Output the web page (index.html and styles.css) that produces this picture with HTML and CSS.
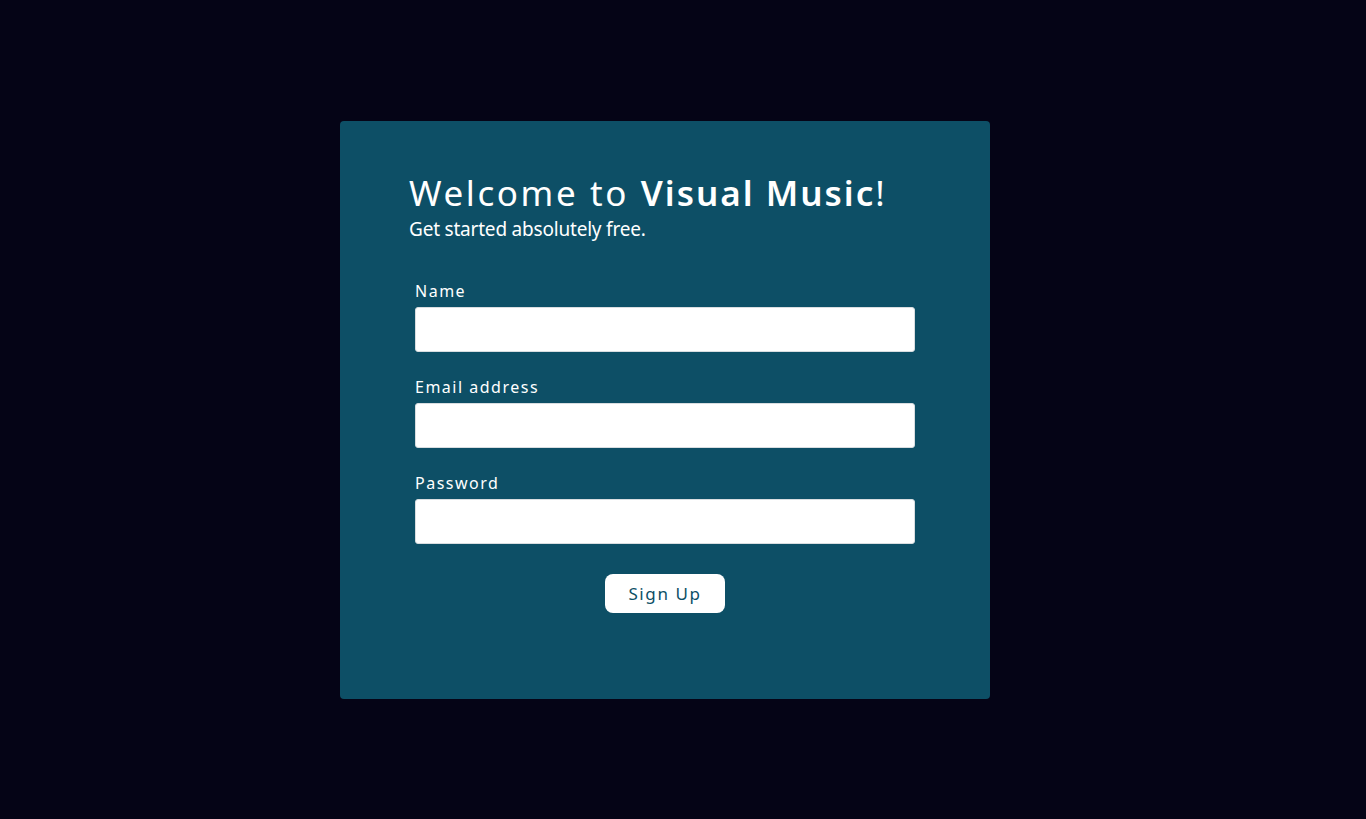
FILE: index.html
```html
<!DOCTYPE html>
<html>
<head>
<meta charset="utf-8">
<link rel="stylesheet" href="styles.css">
</head>
<body>
<div class="page">
  <div class="card">
    <div class="heading">
      <h1 class="title">Welcome to <b>Visual Music</b>!</h1>
      <p class="subtitle">Get started absolutely free.</p>
    </div>
    <form class="form">
      <div class="field">
        <label class="label">Name</label>
        <input class="input" type="text">
      </div>
      <div class="field">
        <label class="label">Email address</label>
        <input class="input" type="email">
      </div>
      <div class="field">
        <label class="label">Password</label>
        <input class="input" type="password">
      </div>
      <div class="actions">
        <button class="btn" type="button">Sign Up</button>
      </div>
    </form>
  </div>
</div>
</body>
</html>
```
FILE: styles.css
```css
html, body {
  margin: 0;
  padding: 0;
  background: #050416;
  font-family: "Noto Sans", "Open Sans", sans-serif;
  color: #fff;
}
.page {
  height: 819px;
  display: flex;
  justify-content: center;
  align-items: flex-start;
  padding: 121px 36px 0 0;
  box-sizing: border-box;
}
.card {
  width: 650px;
  height: 578px;
  background: #0d4f66;
  border-radius: 4px;
  box-sizing: border-box;
  padding: 51px 0 0 0;
}
.heading {
  padding-left: 69px;
}
.title {
  margin: 0;
  font-size: 35px;
  font-weight: 400;
  letter-spacing: 2.6px;
  line-height: 42px;
}
.title b {
  font-weight: 600;
  letter-spacing: 2px;
}
.subtitle {
  margin: 2px 0 0;
  font-size: 19px;
  line-height: 26px;
  letter-spacing: -0.2px;
}
.form {
  width: 500px;
  margin: 38px auto 0;
  display: flex;
  flex-direction: column;
  gap: 24px;
}
.field {
  display: flex;
  flex-direction: column;
  gap: 5px;
}
.label {
  font-size: 16px;
  letter-spacing: 1.5px;
  line-height: 22px;
}
.input {
  height: 45px;
  box-sizing: border-box;
  border: 1px solid #d8dde0;
  border-radius: 3px;
  background: #fff;
  margin: 0;
}
.actions {
  display: flex;
  justify-content: center;
  padding-top: 6px;
}
.btn {
  width: 120px;
  height: 39px;
  border: none;
  border-radius: 8px;
  background: #fff;
  color: #0d4f66;
  font-family: "Noto Sans", "Open Sans", sans-serif;
  font-size: 17px;
  letter-spacing: 1.6px;
  padding: 0;
}
```
